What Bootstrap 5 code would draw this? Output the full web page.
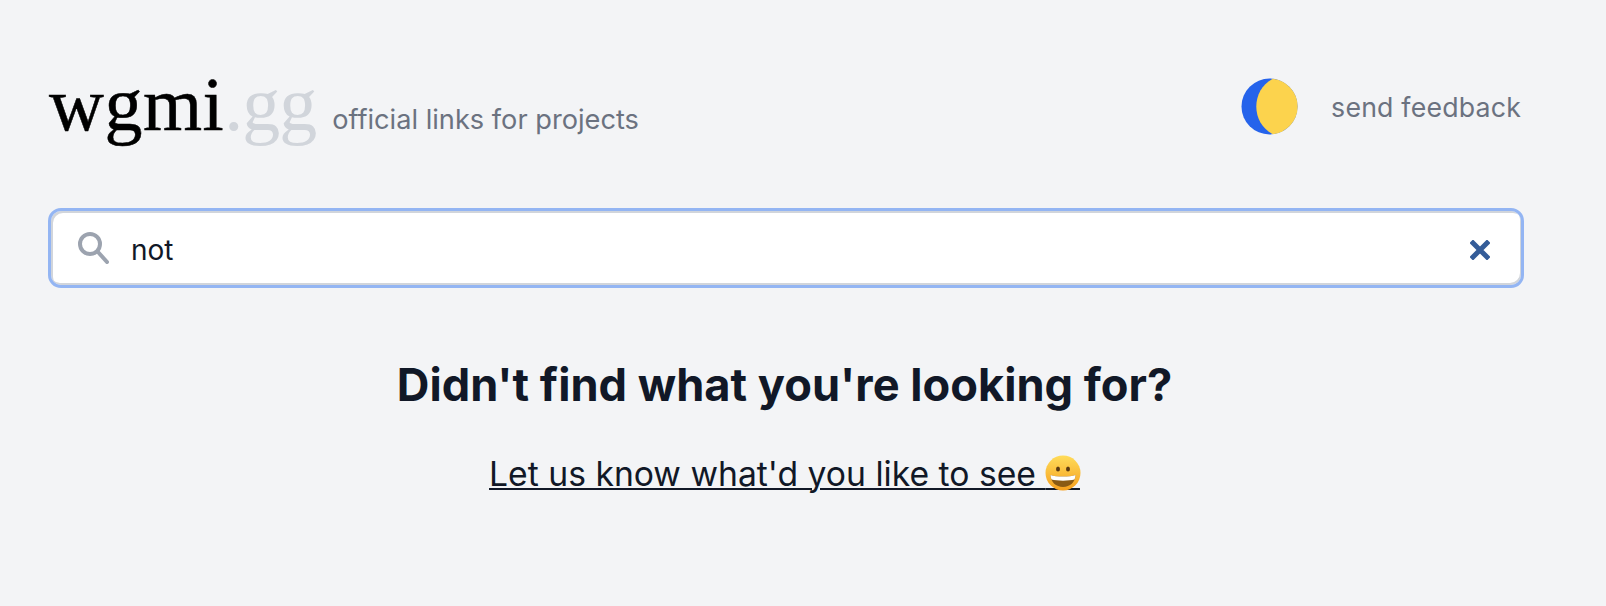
<!DOCTYPE html>
<html lang="en">
<head>
  <meta charset="UTF-8">
  <title>wgmi.gg</title>
  <meta name="viewport" content="width=device-width, initial-scale=1">
  <link href="https://cdn.jsdelivr.net/npm/bootstrap@5.3.3/dist/css/bootstrap.min.css" rel="stylesheet">
  <style>
    html, body { height: 606px; overflow: hidden; }
    body { background: #f3f4f6; font-family: Inter, "Liberation Sans", sans-serif; color: #111827; }
    .page-wrap { width: 1475px; margin-left: 49px; padding-top: 60px; }
    .site-head { height: 88px; }
    .logo-name { font-family: "Liberation Serif", serif; font-size: 76px; line-height: 86px; color: #000; -webkit-text-stroke: .5px #000; letter-spacing: .5px; }
    .logo-tld { color: #d1d5db; -webkit-text-stroke: 0; letter-spacing: -1px; }
    .tagline { font-size: 27.2px; color: #6b7280; margin-left: 16px; line-height: 1; padding-bottom: 14px; }
    .feedback-link { font-size: 26.7px; color: #6b7280; text-decoration: none; letter-spacing: .2px; margin-right: 3px; padding-top: 6px; }
    .theme-btn { width: 57px; height: 57px; margin-right: 33px; margin-top: 4px; padding: 0; border: 0; background: none; display: block; }
    .search-box { height: 80px; margin-top: 60px; margin-left: -1px; background: #fff; border: 3px solid #93b5f3; box-shadow: inset 2px 2px 0 #d1d5db, inset -1px -2px 0 #d1d5db; border-radius: 13px; padding: 0 31px 0 26px; }
    .search-field { border: 0; outline: 0; background: none; font-size: 28px; color: #111827; font-family: inherit; padding: 3px 0 0; margin-left: 22px; }
    .clear-btn { border: 0; background: none; padding: 3px 0 0; line-height: 0; }
    .not-found { margin-top: 69px; margin-right: 4px; }
    .not-found h2 { font-size: 45.2px; font-weight: 700; line-height: 56px; margin: 0; color: #111827; }
    .ask-link { display: inline-block; margin-top: 39px; font-size: 33.7px; line-height: 44px; color: #111827; text-decoration: underline; text-decoration-thickness: 2px; text-underline-offset: 2px; font-weight: 400; }
    .emoji-slot { position: relative; letter-spacing: 25px; }
    .emoji-slot svg { position: absolute; right: -1px; top: 2px; }
  </style>
</head>
<body>
  <div class="page-wrap">
    <header class="site-head d-flex justify-content-between align-items-center">
      <div class="d-flex align-items-end">
        <span class="logo-name">wgmi<span class="logo-tld">.gg</span></span>
        <span class="tagline">official links for projects</span>
      </div>
      <div class="d-flex align-items-center">
        <button class="theme-btn" type="button" aria-label="Toggle theme">
          <svg width="57" height="57" viewBox="0 0 57 57">
            <circle cx="28.5" cy="28.5" r="28" fill="#2563eb"/>
            <path d="M32 .7A28 28 0 0 1 32 56.3C21.500 51 15.300 40.500 15.300 28.500S21.500 6 32 .7Z" fill="#fcd34d"/>
          </svg>
        </button>
        <a class="feedback-link" href="#">send feedback</a>
      </div>
    </header>

    <div class="search-box d-flex align-items-center">
      <svg width="32" height="32" viewBox="0 0 32 32" fill="none" stroke="#9ca3af" stroke-width="4" stroke-linecap="round">
        <circle cx="13" cy="12" r="10"/>
        <path d="M21 20 30 30"/>
      </svg>
      <input class="search-field flex-grow-1" type="text" value="not" aria-label="Search">
      <button class="clear-btn" type="button" aria-label="Clear search">
        <svg width="20" height="20" viewBox="0 0 20 20" stroke="#345c98" stroke-width="5" stroke-linecap="square">
          <path d="M3 3 17 17M17 3 3 17"/>
        </svg>
      </button>
    </div>

    <div class="not-found text-center">
      <h2>Didn't find what you're looking for?</h2>
      <a class="ask-link" href="#">Let us know what'd you like to see <span class="emoji-slot">&nbsp;<svg width="36" height="36" viewBox="0 0 36 36">
          <defs>
            <linearGradient id="faceGrad" x1="0" y1="0" x2="0" y2="1">
              <stop offset="0" stop-color="#ffdc5a"/>
              <stop offset="1" stop-color="#f59f1e"/>
            </linearGradient>
          </defs>
          <circle cx="18" cy="18" r="17.500" fill="url(#faceGrad)"/>
          <ellipse cx="13" cy="14" rx="2" ry="2.500" fill="#5b3a12"/>
          <ellipse cx="23" cy="14" rx="2" ry="2.500" fill="#5b3a12"/>
          <path d="M5.500 20C11 22 25 22 30.500 20 30.500 27 25 32 18 32S5.500 27 5.500 20Z" fill="#8a5a14"/>
          <path d="M5.500 20C11 22 25 22 30.500 20 30.500 21.500 30.200 23 29.500 24.500 24 26 12 26 6.500 24.500 5.800 23 5.500 21.500 5.500 20Z" fill="#fff"/>
        </svg></span></a>
    </div>
  </div>

  <script src="https://cdn.jsdelivr.net/npm/bootstrap@5.3.3/dist/js/bootstrap.bundle.min.js"></script>
</body>
</html>
